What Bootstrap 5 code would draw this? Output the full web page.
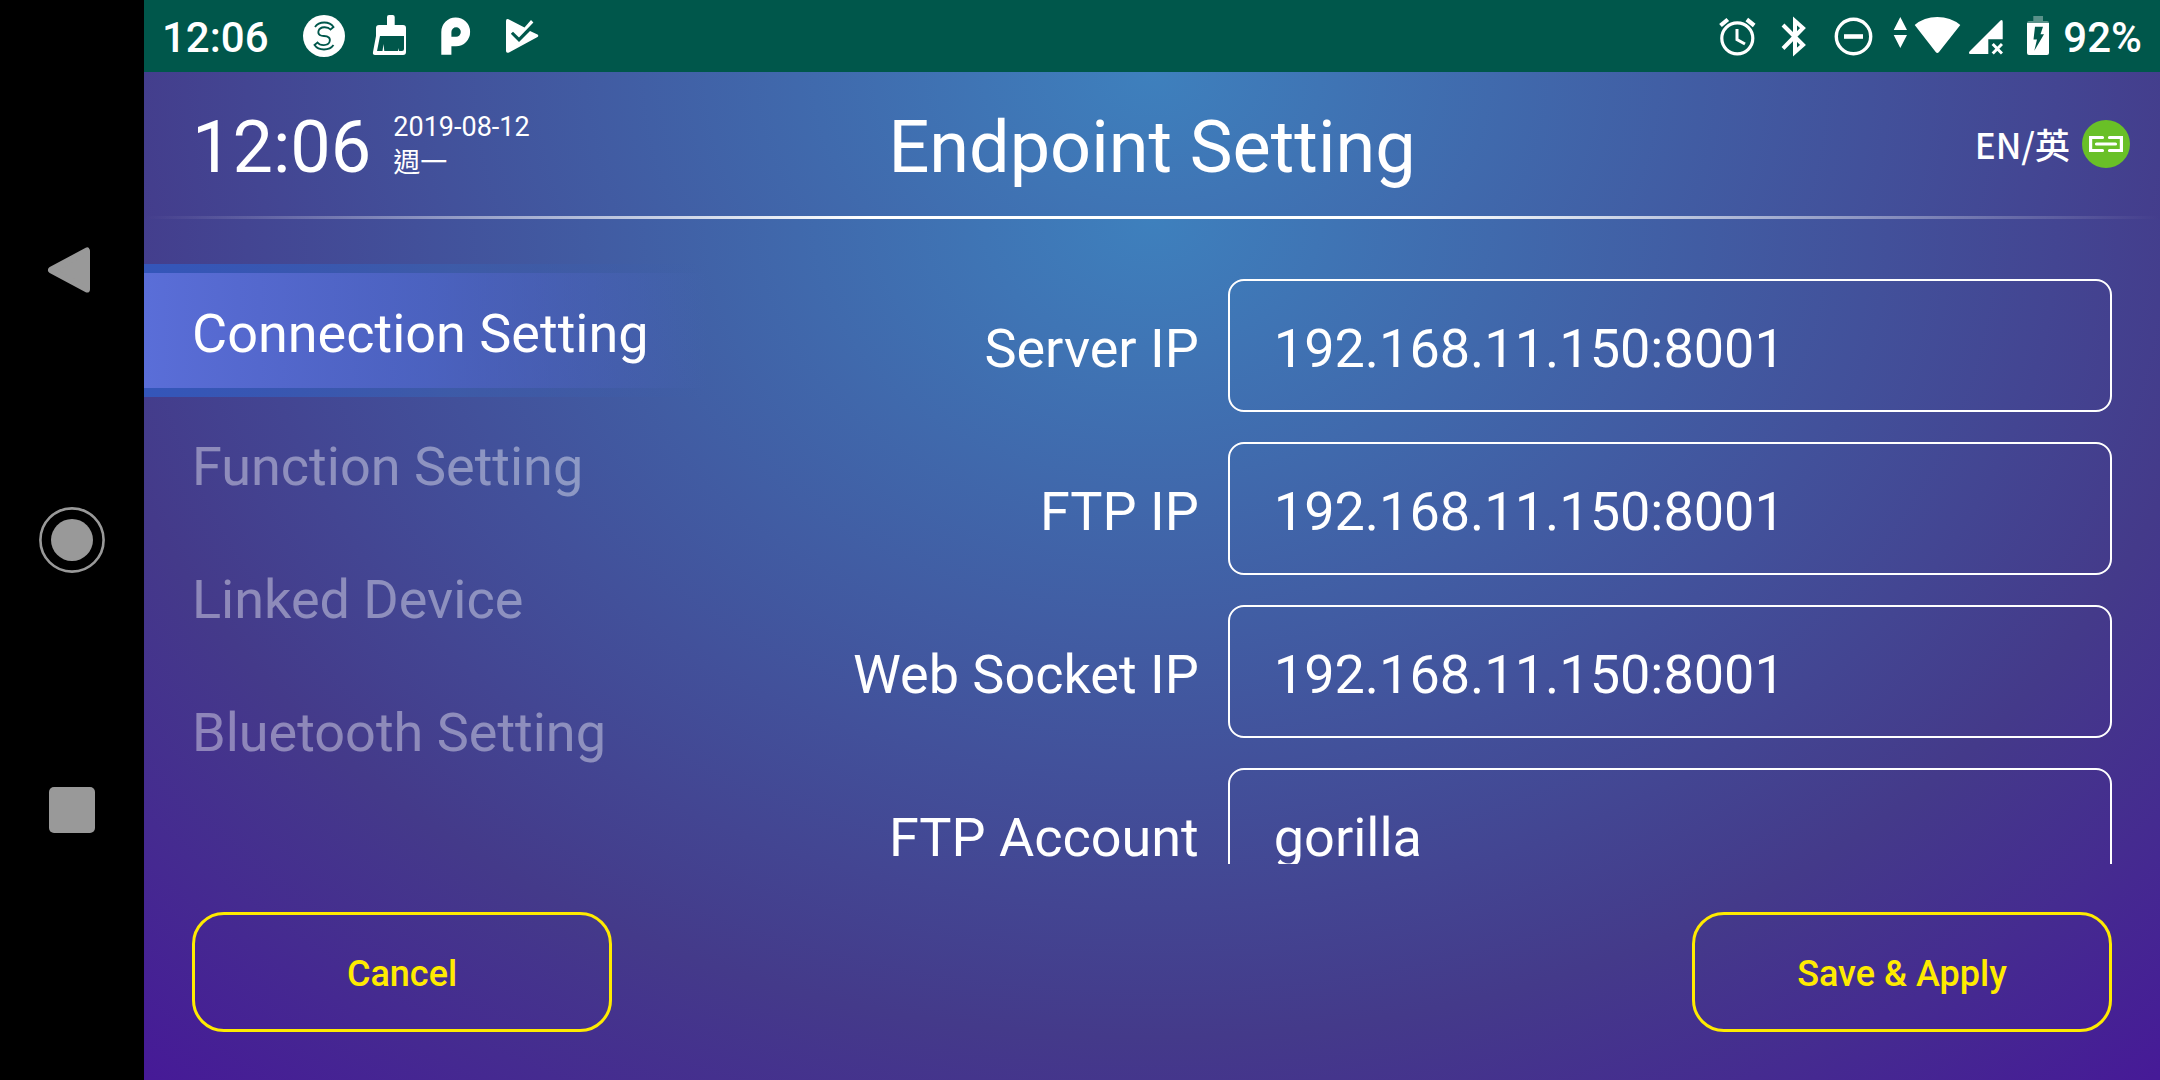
<!DOCTYPE html>
<html lang="en">
<head>
<meta charset="utf-8">
<meta name="viewport" content="width=device-width, initial-scale=1">
<title>Endpoint Setting</title>
<link href="https://cdn.jsdelivr.net/npm/bootstrap@5.3.0/dist/css/bootstrap.min.css" rel="stylesheet">
<style>
  body { font-family: Roboto, "Noto Sans CJK TC", sans-serif; color: #fff; background: #000; }
  svg { display: block; flex: none; }
  .sys-nav { width: 144px; background: #000; padding-block: 12.5vh; }
  .sys-nav button { background: none; border: 0; padding: 0; color: #999; }
  .screen { min-width: 0; }
  .status-strip { height: 72px; background: #00574b; padding: 0 18px; font-size: 42px; font-weight: 500; line-height: 48px; }
  .status-strip .pad-text { padding-top: 3px; }
  .strip-left { gap: 18px; }
  .strip-left .pad-text { margin-right: 13px; }
  .strip-right { gap: 9px; }
  .glow { background: radial-gradient(75% 1152px at 50% 0, #3e80bd 0%, #443a8a 71%, #461a97 100%); }
  .top-head { height: 144px; display: grid; grid-template-columns: 1fr auto 1fr; }
  .big-text { font-size: 72px; line-height: 84px; font-weight: 400; padding-top: 8px; margin: 0; }
  .day-text { font-size: 27px; line-height: 36px; padding-top: 2px; }
  .clock-group { gap: 22px; padding-left: 48px; }
  .lang-btn { background: none; border: 0; padding: 0; color: #fff; font-family: "Noto Sans CJK TC", sans-serif; font-size: 35px; line-height: 48px; font-weight: 500; }
  .top-right { gap: 12px; padding-right: 30px; }
  .rule { height: 3px; background: linear-gradient(90deg, transparent, #fff 36%, #fff 63%, transparent), radial-gradient(75% 1152px at 50% -144px, #3e80bd 0%, #443a8a 71%, #461a97 100%); }
  .main-area, .work { min-height: 0; }
  .work { padding-top: 45px; }
  .side-menu { flex: 0 0 28%; }
  .side-menu a { color: rgba(255,255,255,.4); font-size: 54px; line-height: 63px; padding: 38px 0 32px 48px; text-decoration: none; white-space: nowrap; }
  .side-menu a.active {
    color: #fff;
    background:
      linear-gradient(90deg, #3456ba, rgba(60,94,172,.75) 55%, rgba(64,100,170,0)) top / 100% 9px no-repeat,
      linear-gradient(90deg, #3456ba, rgba(60,94,172,.75) 55%, rgba(64,100,170,0)) bottom / 100% 9px no-repeat,
      linear-gradient(90deg, #5a6ed8, rgba(78,104,204,.75) 50%, rgba(76,108,200,0)) center / 100% calc(100% - 18px) no-repeat;
  }
  .field-list { overflow: hidden; padding: 15px 48px 0 0; gap: 30px; font-size: 54px; line-height: 63px; min-width: 0; }
  .field-list label { padding-top: 6px; text-align: right; }
  .field-row { gap: 29px; flex: none; }
  .field-row input { width: 63%; height: 133px; background: transparent; color: #fff; border: 2px solid #fff; border-radius: 16px; padding: 6px 44px 0; outline: 0; }
  .foot-bar { padding: 48px; }
  .outline-btn { width: 420px; height: 120px; border: 3px solid #ffeb00; border-radius: 32px; background: transparent; color: #ffeb00; font-size: 36px; line-height: 42px; font-weight: 500; padding: 3px 0 0; }
</style>
<script src="https://cdn.jsdelivr.net/npm/bootstrap@5.3.0/dist/js/bootstrap.bundle.min.js"></script>
</head>
<body>
<div class="d-flex vh-100 overflow-hidden">
  <nav class="sys-nav d-flex flex-column align-items-center justify-content-around flex-shrink-0" aria-label="System">
    <button type="button" aria-label="Back"><svg width="72" height="72" viewBox="0 0 72 72"><path d="M15 36 51 19V53z" transform="translate(0 -4.500) scale(1 1.125)" fill="currentColor" stroke="currentColor" stroke-width="6" stroke-linejoin="round"/></svg></button>
    <button type="button" aria-label="Home"><svg width="72" height="72" viewBox="0 0 72 72"><circle cx="36" cy="36" r="31.6" fill="none" stroke="currentColor" stroke-width="2.6"/><circle cx="36" cy="36" r="21" fill="currentColor"/></svg></button>
    <button type="button" aria-label="Recent apps"><svg width="72" height="72" viewBox="0 0 72 72"><rect x="13" y="13" width="46" height="46" rx="5" fill="currentColor"/></svg></button>
  </nav>

  <div class="screen d-flex flex-column flex-grow-1">
    <div class="status-strip d-flex align-items-center justify-content-between flex-shrink-0">
      <div class="strip-left d-flex align-items-center">
        <span class="pad-text">12:06</span>
        <svg width="48" height="48" viewBox="0 0 48 48"><circle cx="24" cy="24" r="21" fill="#fff"/><g fill="none" stroke="#00574b" stroke-width="1.8"><path d="M15 15C19 9 29.500 9 33.500 15L30.500 17.500C28 14.500 20 14 18.500 19 17.500 23 21 24 24 24 28 24 31 26 29.500 30 28 34 20 34 17.500 30.500L14.500 33C18.500 39 29.500 39 33.500 33"/></g></svg>
        <svg width="48" height="48" viewBox="0 0 48 48"><path fill="#fff" fill-rule="evenodd" d="M21 5q0-2 2-2h3.700q2 0 2 2v8H37q3 0 3 3v24q0 3-3 3H9q-2.600 0-2-3l3-16v-8q0-3 3-3h8zM14 24 11 39H16.500l1-7 .8 7H32l1-3v3H36q2 0 2-2V24z"/></svg>
        <svg width="48" height="48" viewBox="0 0 48 48"><path fill="#fff" fill-rule="evenodd" d="M9.300 42.700V20A14.400 14.400 0 1 1 24 34.300H19.400V42.700zM19.400 24.700H24A4.700 4.700 0 1 0 19.400 20z"/></svg>
        <svg width="48" height="48" viewBox="0 0 48 48"><path fill="#fff" d="M8 9Q8 6.300 10.500 7.200L26.500 15.500 33 8 35.400 10.500 21 25.500 15 19.700 12.800 21.800 21 30 32 19 39.500 22.500Q41 23.500 39.500 25L11 40.500Q8 41.500 8 39z"/></svg>
      </div>
      <div class="strip-right d-flex align-items-center">
        <svg width="48" height="48" viewBox="0 0 48 48" fill="none" stroke="#fff"><circle cx="25.300" cy="26.300" r="15.500" stroke-width="3.200"/><path d="M8.500 13.500 15.800 7.500M34.800 7.500 42.200 13.500" stroke-width="4.200"/><path d="M25 17V27.500L33 32" stroke-width="3"/></svg>
        <svg width="48" height="48" viewBox="0 0 48 48" fill="none" stroke="#fff" stroke-width="4"><path d="M14 13 34 33 26 40V9L34 16 14 36.500"/></svg>
        <svg width="48" height="48" viewBox="0 0 48 48" fill="none" stroke="#fff"><circle cx="27.500" cy="24.500" r="17.200" stroke-width="3.400"/><path d="M18 24.500H37" stroke-width="4.600"/></svg>
        <svg width="120" height="48" viewBox="0 0 120 48"><path fill="#fff" d="M17.300 5 24 18H10.700zM10.700 23H24L17.300 36zM31.700 13Q41 5 54.300 5T77.300 13L56 40Q54.300 42 52.700 40zM86.500 39.500 117.500 8.500Q119.700 7 119.700 10V27.300H105.300V42H87.500Q85 42 86.500 39.500z"/><path d="M109.700 32 119 41.500M119 32 109.700 41.500" stroke="#fff" stroke-width="3" fill="none"/></svg>
        <svg width="42" height="48" viewBox="0 0 42 48"><path fill="#fff" opacity=".35" d="M21.300 4H31V9H35Q37 9 37 11H15Q15 9 17 9H21.300z"/><path fill="#fff" fill-rule="evenodd" d="M15 11H37V41Q37 43 35 43H17Q15 43 15 41zM23 14.700 21.500 27.500H25L22.300 38.700 32 22.300H28.500L31 14.700z"/></svg>
        <span class="pad-text">92%</span>
      </div>
    </div>

    <header class="top-head glow align-items-center flex-shrink-0">
      <div class="clock-group d-flex align-items-center">
        <div class="big-text">12:06</div>
        <div class="day-text">2019-08-12<br><span lang="zh-Hant">週一</span></div>
      </div>
      <h1 class="big-text">Endpoint Setting</h1>
      <div class="top-right d-flex align-items-center justify-content-end">
        <button type="button" class="lang-btn">EN/英</button>
        <svg width="48" height="48" viewBox="0 0 48 48" role="img" aria-label="Linked"><circle cx="24" cy="24" r="24" fill="#69c027"/><g fill="none" stroke="#fff" stroke-width="3.200" stroke-linecap="round"><path d="M20.500 17.500H8.600V30.500H20.500M27.500 17.500H39.400V30.500H27.500M14.500 24H33.500"/></g></svg>
      </div>
    </header>
    <div class="rule flex-shrink-0"></div>

    <main class="main-area glow d-flex flex-column flex-grow-1">
      <div class="work d-flex flex-grow-1">
        <nav class="side-menu d-flex flex-column" aria-label="Settings">
          <a href="#connection" class="active" aria-current="page">Connection Setting</a>
          <a href="#function">Function Setting</a>
          <a href="#linked">Linked Device</a>
          <a href="#bluetooth">Bluetooth Setting</a>
        </nav>
        <form class="field-list d-flex flex-column flex-grow-1" id="endpoint">
          <div class="field-row d-flex align-items-center"><label class="flex-grow-1" for="server">Server IP</label><input id="server" type="text" value="192.168.11.150:8001"></div>
          <div class="field-row d-flex align-items-center"><label class="flex-grow-1" for="ftp">FTP IP</label><input id="ftp" type="text" value="192.168.11.150:8001"></div>
          <div class="field-row d-flex align-items-center"><label class="flex-grow-1" for="socket">Web Socket IP</label><input id="socket" type="text" value="192.168.11.150:8001"></div>
          <div class="field-row d-flex align-items-center"><label class="flex-grow-1" for="account">FTP Account</label><input id="account" type="text" value="gorilla"></div>
        </form>
      </div>
      <footer class="foot-bar d-flex justify-content-between flex-shrink-0">
        <button type="button" class="outline-btn">Cancel</button>
        <button type="submit" form="endpoint" class="outline-btn">Save &amp; Apply</button>
      </footer>
    </main>
  </div>
</div>
</body>
</html>
